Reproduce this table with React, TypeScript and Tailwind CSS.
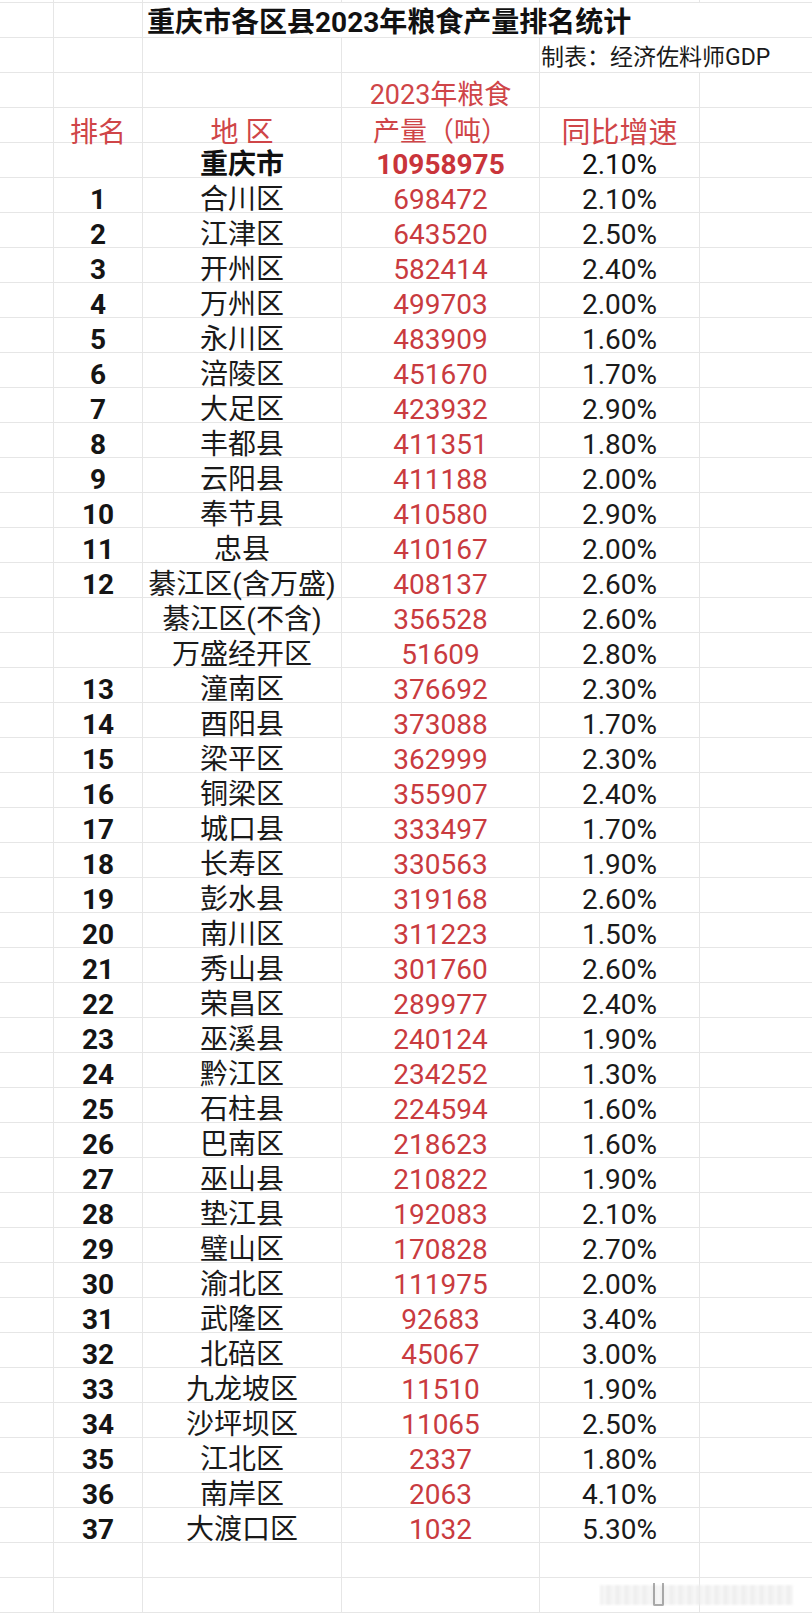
import type { ReactNode } from 'react'

const FONT = "font-['Roboto','Noto_Sans_CJK_SC',sans-serif]"
const COLS = 'grid grid-cols-[54px_89px_199px_198px_160px_1fr]'
const LINE = 'border-[#e6e6e6]'

type Region = { rank: string; name: string; output: string; growth: string }

const REGIONS: Region[] = [
  { rank: '1', name: '合川区', output: '698472', growth: '2.10%' },
  { rank: '2', name: '江津区', output: '643520', growth: '2.50%' },
  { rank: '3', name: '开州区', output: '582414', growth: '2.40%' },
  { rank: '4', name: '万州区', output: '499703', growth: '2.00%' },
  { rank: '5', name: '永川区', output: '483909', growth: '1.60%' },
  { rank: '6', name: '涪陵区', output: '451670', growth: '1.70%' },
  { rank: '7', name: '大足区', output: '423932', growth: '2.90%' },
  { rank: '8', name: '丰都县', output: '411351', growth: '1.80%' },
  { rank: '9', name: '云阳县', output: '411188', growth: '2.00%' },
  { rank: '10', name: '奉节县', output: '410580', growth: '2.90%' },
  { rank: '11', name: '忠县', output: '410167', growth: '2.00%' },
  { rank: '12', name: '綦江区(含万盛)', output: '408137', growth: '2.60%' },
  { rank: '', name: '綦江区(不含)', output: '356528', growth: '2.60%' },
  { rank: '', name: '万盛经开区', output: '51609', growth: '2.80%' },
  { rank: '13', name: '潼南区', output: '376692', growth: '2.30%' },
  { rank: '14', name: '酉阳县', output: '373088', growth: '1.70%' },
  { rank: '15', name: '梁平区', output: '362999', growth: '2.30%' },
  { rank: '16', name: '铜梁区', output: '355907', growth: '2.40%' },
  { rank: '17', name: '城口县', output: '333497', growth: '1.70%' },
  { rank: '18', name: '长寿区', output: '330563', growth: '1.90%' },
  { rank: '19', name: '彭水县', output: '319168', growth: '2.60%' },
  { rank: '20', name: '南川区', output: '311223', growth: '1.50%' },
  { rank: '21', name: '秀山县', output: '301760', growth: '2.60%' },
  { rank: '22', name: '荣昌区', output: '289977', growth: '2.40%' },
  { rank: '23', name: '巫溪县', output: '240124', growth: '1.90%' },
  { rank: '24', name: '黔江区', output: '234252', growth: '1.30%' },
  { rank: '25', name: '石柱县', output: '224594', growth: '1.60%' },
  { rank: '26', name: '巴南区', output: '218623', growth: '1.60%' },
  { rank: '27', name: '巫山县', output: '210822', growth: '1.90%' },
  { rank: '28', name: '垫江县', output: '192083', growth: '2.10%' },
  { rank: '29', name: '璧山区', output: '170828', growth: '2.70%' },
  { rank: '30', name: '渝北区', output: '111975', growth: '2.00%' },
  { rank: '31', name: '武隆区', output: '92683', growth: '3.40%' },
  { rank: '32', name: '北碚区', output: '45067', growth: '3.00%' },
  { rank: '33', name: '九龙坡区', output: '11510', growth: '1.90%' },
  { rank: '34', name: '沙坪坝区', output: '11065', growth: '2.50%' },
  { rank: '35', name: '江北区', output: '2337', growth: '1.80%' },
  { rank: '36', name: '南岸区', output: '2063', growth: '4.10%' },
  { rank: '37', name: '大渡口区', output: '1032', growth: '5.30%' }
]

// spreadsheet cell, text sits a little low like excel's bottom alignment
const Cell = ({ children, className = '' }: { children?: ReactNode; className?: string }) => (
  <div
    className={`flex items-center justify-center whitespace-nowrap border-r ${LINE} pt-[8px] leading-[28px] ${className}`}
  >
    {children}
  </div>
)

const EmptyRow = ({ h = 'h-[35px]' }: { h?: string }) => (
  <div className={`${COLS} ${h} border-b ${LINE}`}>
    <div className={`border-r ${LINE}`} />
    <div className={`border-r ${LINE}`} />
    <div className={`border-r ${LINE}`} />
    <div className={`border-r ${LINE}`} />
    <div className={`border-r ${LINE}`} />
    <div />
  </div>
)

const DataRow = ({ region }: { region: Region }) => (
  <div className={`${COLS} h-[35px] border-b ${LINE} text-[28px]`}>
    <Cell />
    <Cell className="font-bold text-[#151515]">{region.rank}</Cell>
    <Cell className="text-[#1a1a1a]">{region.name}</Cell>
    <Cell className="text-[#c93b3f]">{region.output}</Cell>
    <Cell className="text-[#1a1a1a]">{region.growth}</Cell>
    <div />
  </div>
)

export default function App() {
  return (
    <div className={`relative h-[1624px] w-[812px] overflow-hidden bg-white ${FONT}`}>
      <EmptyRow h="h-[3px]" />

      {/* title, spills over the cells on the right */}
      <div className={`${COLS} h-[35px] border-b ${LINE}`}>
        <div className={`border-r ${LINE}`} />
        <div className={`border-r ${LINE}`} />
        <div className="col-span-4 flex items-center whitespace-nowrap pl-1 pt-[6px] text-[28px] leading-[28px] font-bold text-[#111]">
          重庆市各区县2023年粮食产量排名统计
        </div>
      </div>

      <div className={`${COLS} h-[35px] border-b ${LINE}`}>
        <div className={`border-r ${LINE}`} />
        <div className={`border-r ${LINE}`} />
        <div className={`border-r ${LINE}`} />
        <div className={`border-r ${LINE}`} />
        <div className="col-span-2 flex items-end whitespace-nowrap pb-[1px] pl-[1px] text-[23px] leading-[26px] text-[#1a1a1a]">
          制表：经济佐料师GDP
        </div>
      </div>

      <div className={`${COLS} h-[35px] border-b ${LINE} text-[27px]`}>
        <Cell />
        <Cell />
        <Cell />
        <Cell className="text-[#cf4548]">2023年粮食</Cell>
        <Cell />
        <div />
      </div>

      <div className={`${COLS} h-[35px] border-b ${LINE} text-[28px] text-[#cf4548]`}>
        <Cell />
        <Cell className="pt-[11px]">排名</Cell>
        <Cell className="pt-[11px]">地 区</Cell>
        <Cell className="text-[27px]">产量（吨）</Cell>
        <Cell className="pt-[11px] text-[29px]">同比增速</Cell>
        <div />
      </div>

      <div className={`${COLS} h-[35px] border-b ${LINE} text-[28px]`}>
        <Cell className="pt-[5px]" />
        <Cell className="pt-[5px]" />
        <Cell className="pt-[5px] font-bold text-[#111]">重庆市</Cell>
        <Cell className="pt-[5px] font-bold text-[#c9343a]">10958975</Cell>
        <Cell className="pt-[5px] text-[#111]">2.10%</Cell>
        <div />
      </div>

      {REGIONS.map((region, i) => (
        <DataRow key={`${region.name}-${i}`} region={region} />
      ))}

      <EmptyRow />
      <EmptyRow />

      {/* smudged watermark at the bottom right */}
      <div className="absolute left-[600px] top-[1585px] h-[20px] w-[193px] bg-[repeating-linear-gradient(90deg,#ececec_0px,#f7f7f7_5px,#e6e6e6_9px)] opacity-80 blur-[1px]" />
      <div className="absolute left-[653px] top-[1583px] h-[23px] w-[11px] rounded-b-[2px] border-x-2 border-b-2 border-[#8a8a8a] opacity-70 blur-[0.6px]" />
    </div>
  )
}
